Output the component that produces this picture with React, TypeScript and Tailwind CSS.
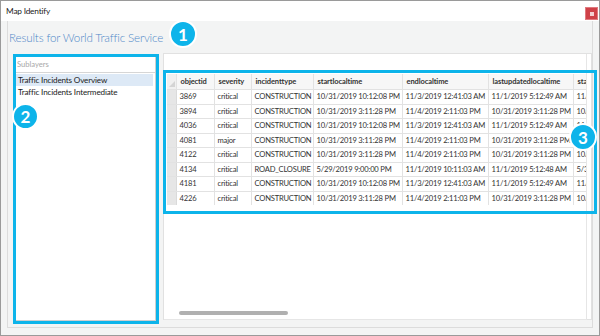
import React from "react";

const cols = [
  { key: "objectid", w: 38 },
  { key: "severity", w: 37 },
  { key: "incidenttype", w: 62 },
  { key: "startlocaltime", w: 89 },
  { key: "endlocaltime", w: 86 },
  { key: "lastupdatedlocaltime", w: 85 },
  { key: "starttime", w: 40 },
];

const rows = [
  ["3869", "critical", "CONSTRUCTION", "10/31/2019 10:12:08 PM", "11/3/2019 12:41:03 AM", "11/1/2019 5:12:49 AM", "11/1/2019"],
  ["3894", "critical", "CONSTRUCTION", "10/31/2019 3:11:28 PM", "11/4/2019 2:11:03 PM", "10/31/2019 3:11:28 PM", "10/31/2019"],
  ["4036", "critical", "CONSTRUCTION", "10/31/2019 10:12:08 PM", "11/3/2019 12:41:03 AM", "11/1/2019 5:12:49 AM", "11/1/2019"],
  ["4081", "major", "CONSTRUCTION", "10/31/2019 3:11:28 PM", "11/4/2019 2:11:03 PM", "10/31/2019 3:11:28 PM", "10/31/2019"],
  ["4122", "critical", "CONSTRUCTION", "10/31/2019 3:11:28 PM", "11/4/2019 2:11:03 PM", "10/31/2019 3:11:28 PM", "10/31/2019"],
  ["4134", "critical", "ROAD_CLOSURE", "5/29/2019 9:00:00 PM", "11/1/2019 10:11:03 AM", "11/1/2019 5:12:48 AM", "5/30/2019"],
  ["4181", "critical", "CONSTRUCTION", "10/31/2019 10:12:08 PM", "11/3/2019 12:41:03 AM", "11/1/2019 5:12:49 AM", "11/1/2019"],
  ["4226", "critical", "CONSTRUCTION", "10/31/2019 3:11:28 PM", "11/4/2019 2:11:03 PM", "10/31/2019 3:11:28 PM", "10/31/2019"],
];

function Badge({ n, className }: { n: string; className: string }) {
  return (
    <div
      className={
        "absolute flex items-center justify-center rounded-full bg-[#0db4ea] border-2 border-white text-white font-bold text-[17px] leading-none " +
        className
      }
    >
      {n}
    </div>
  );
}

export default function App() {
  return (
    <div
      className="relative w-[600px] h-[336px] overflow-hidden bg-[#f3f4f4] border border-[#9a9a9a] flex flex-col"
      style={{ fontFamily: "Lato, 'Liberation Sans', sans-serif" }}
    >
      {/* title bar */}
      <div className="h-[20px] shrink-0 bg-white flex items-center justify-between pl-[5px] pr-[1px]">
        <span className="text-[8.3px] tracking-[-0.2px] text-[#222]">Map Identify</span>
        <div className="w-[13px] h-[13px] mt-[5px] bg-[#cf4148] border border-[#e07a7f] flex items-center justify-center">
          <div className="w-[4px] h-[4px] bg-[#f4d0d2]" />
        </div>
      </div>

      {/* body frame */}
      <div className="ml-[6px] w-[586px] h-[307px] border-l border-r border-b border-[#dcdcdc] flex flex-col">
        <div className="h-[32px] shrink-0 flex items-center pl-[1px] pt-[1px]">
          <span className="text-[11.6px] font-light text-[#4f88c8] tracking-[-0.15px]">
            Results for World Traffic Service
          </span>
        </div>

        <div className="flex flex-1 pb-[2px]">
          {/* left panel */}
          <div className="ml-[5px] mt-[1px] w-[146px] h-[270px] border-[3px] border-[#0db4ea] flex">
            <div className="flex-1 bg-white border-r border-b border-[#cfcfcf] flex flex-col">
              <div className="h-[15px] flex items-center pl-[1px] text-[7.6px] text-[#a8a8a8]">Sublayers</div>
              <div className="flex-1 border-t border-[#d6d6d6] flex flex-col pt-[1px]">
                <div className="h-[12px] mr-[2px] bg-[#dde9f6] flex items-center pl-[2px] text-[8.1px] tracking-[-0.15px] text-[#222]">
                  Traffic Incidents Overview
                </div>
                <div className="h-[12px] flex items-center pl-[2px] text-[8.1px] tracking-[-0.15px] text-[#222]">
                  Traffic Incidents Intermediate
                </div>
              </div>
            </div>
          </div>

          {/* right panel */}
          <div className="ml-[4px] w-[431px] h-[267px] bg-white border border-[#e1e1e1] flex">
            <div className="w-[423px] h-[266px] border-r border-b border-[#e6e6e6] overflow-hidden flex flex-col pl-[3px] pt-[20px]">
              <div className="flex h-[15px] shrink-0 bg-[#f7f7f7]">
                <div className="w-[10px] shrink-0 bg-[#f0f0f0] border-r border-[#e2e2e2] relative">
                  <div className="absolute right-[1px] bottom-[2px] w-0 h-0 border-l-[6px] border-l-transparent border-b-[6px] border-b-[#d4d4d4]" />
                </div>
                {cols.map((c) => (
                  <div
                    key={c.key}
                    style={{ width: c.w }}
                    className="shrink-0 border-r border-[#e2e2e2] flex items-center pl-[4px] text-[7.5px] tracking-[-0.1px] font-bold text-[#333] whitespace-nowrap overflow-hidden"
                  >
                    {c.key}
                  </div>
                ))}
              </div>
              {rows.map((r, i) => (
                <div key={i} className="flex h-[14.5px] shrink-0 border-t border-[#e2e2e2]">
                  <div className="w-[10px] shrink-0 bg-[#e6e6e6] border-r border-[#dadada]" />
                  {r.map((v, j) => (
                    <div
                      key={j}
                      style={{ width: cols[j].w }}
                      className="shrink-0 border-r border-[#e2e2e2] flex items-center pl-[3px] text-[7.6px] tracking-[-0.2px] text-[#333] whitespace-nowrap overflow-hidden"
                    >
                      {v}
                    </div>
                  ))}
                </div>
              ))}
              <div className="flex-1" />
              <div className="h-[8px] shrink-0 flex items-start pl-[12px]">
                <div className="w-[109px] h-[4px] rounded-full bg-[#b0b0b0]" />
              </div>
            </div>
          </div>
        </div>
      </div>

      {/* annotation overlays */}
      <div className="absolute left-[162px] top-[69px] w-[434px] h-[144px] border-[3px] border-[#0db4ea]" />
      <Badge n="1" className="left-[168px] top-[19px] w-[28px] h-[28px]" />
      <Badge n="2" className="left-[11px] top-[102px] w-[27px] h-[27px]" />
      <Badge n="3" className="left-[568px] top-[122px] w-[28px] h-[28px]" />
    </div>
  );
}
